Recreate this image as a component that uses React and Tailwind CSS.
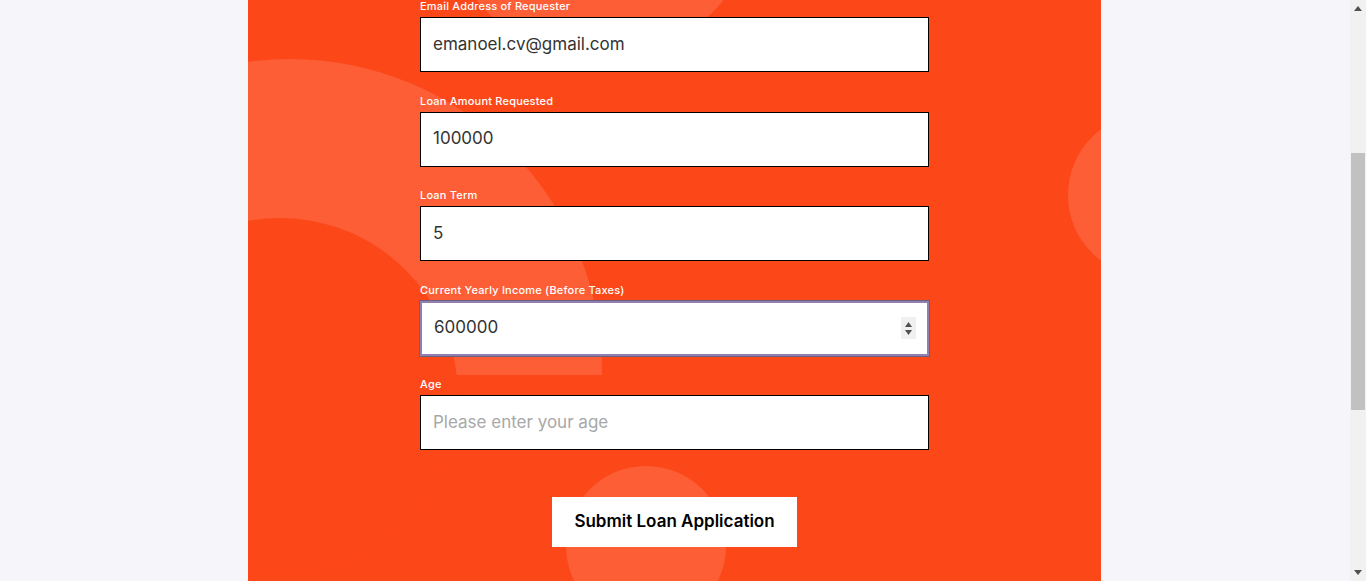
import { useState } from 'react';

const fields = [
  { id: 'email', label: 'Email Address of Requester', value: 'emanoel.cv@gmail.com' },
  { id: 'amount', label: 'Loan Amount Requested', value: '100000' },
  { id: 'term', label: 'Loan Term', value: '5' },
  { id: 'income', label: 'Current Yearly Income (Before Taxes)', value: '600000', focused: true },
  { id: 'age', label: 'Age', value: '', placeholder: 'Please enter your age' },
];

function Spinner() {
  return (
    <div className="absolute right-[13px] top-1/2 -translate-y-1/2 w-[15px] h-[22px] bg-[#f0f0f0] flex flex-col items-center justify-center gap-[3px]">
      <svg width="7" height="5" viewBox="0 0 7 5">
        <path d="M3.5 0 L7 5 L0 5 Z" fill="#505050" />
      </svg>
      <svg width="7" height="5" viewBox="0 0 7 5">
        <path d="M0 0 L7 0 L3.5 5 Z" fill="#505050" />
      </svg>
    </div>
  );
}

export default function App() {
  const [form, setForm] = useState(
    Object.fromEntries(fields.map((f) => [f.id, f.value]))
  );

  return (
    <div className="flex h-[581px] overflow-hidden font-['Inter',sans-serif]">
      <div className="flex-1 bg-[#f6f6fa] flex justify-center">
        <div className="relative w-[853px] mr-[1px] h-full bg-[#fc4719] overflow-hidden">
          {/* decorative circles */}
          <div className="absolute left-[-270px] top-[59px] w-[624px] h-[316px] overflow-hidden">
            <div className="w-[624px] h-[624px] rounded-full bg-[#fd5e36]" />
          </div>
          <div className="absolute left-[-146px] top-[218px] w-[356px] h-[356px] rounded-full bg-[#fc4719]" />
          <div className="absolute left-[193px] top-[-259px] w-[318px] h-[318px] rounded-full bg-[#fd5e36]" />
          <div className="absolute left-[820px] top-[113px] w-[164px] h-[164px] rounded-full bg-[#fd5e36]" />
          <div className="absolute left-[318px] top-[466px] w-[160px] h-[160px] rounded-full bg-[#fd5e36]" />

          <form className="relative w-[509px] ml-[172px] flex flex-col gap-[22.5px]">
            {fields.map((f) => (
              <div key={f.id} className="flex flex-col gap-[5px]">
                <label className="text-[11px] leading-[12px] font-medium text-white tracking-[0.2px]">{f.label}</label>
                <div className="relative">
                  <input
                    value={form[f.id]}
                    placeholder={f.placeholder}
                    onChange={(e) => setForm({ ...form, [f.id]: e.target.value })}
                    className={
                      f.focused
                        ? 'w-full h-[55px] bg-white border-2 border-[#8f80b0] shadow-[0_0_0_1px_#6d5f80] px-[12px] pb-[2px] text-[17px] text-[#333] outline-none'
                        : 'w-full h-[55px] bg-white border border-black px-[12px] pb-[2px] text-[17px] text-[#333] placeholder:text-[#a8a8a8] outline-none'
                    }
                  />
                  {f.focused && <Spinner />}
                </div>
              </div>
            ))}
            <div className="flex justify-center pt-[24px]">
              <button
                type="button"
                className="w-[245px] h-[50px] bg-white text-black text-[17px] font-semibold"
              >
                Submit Loan Application
              </button>
            </div>
          </form>
        </div>
      </div>
      <div className="w-4 bg-[#f1f1f1] flex flex-col items-center">
        <div className="h-[17px] flex items-center justify-center">
          <svg width="8" height="5" viewBox="0 0 8 5">
            <path d="M4 0 L8 5 L0 5 Z" fill="#505050" />
          </svg>
        </div>
        <div className="mt-[136px] w-[14px] h-[257px] bg-[#c1c1c1]" />
        <div className="flex-1" />
        <div className="h-[17px] flex items-center justify-center">
          <svg width="8" height="5" viewBox="0 0 8 5">
            <path d="M0 0 L8 0 L4 5 Z" fill="#505050" />
          </svg>
        </div>
      </div>
    </div>
  );
}
